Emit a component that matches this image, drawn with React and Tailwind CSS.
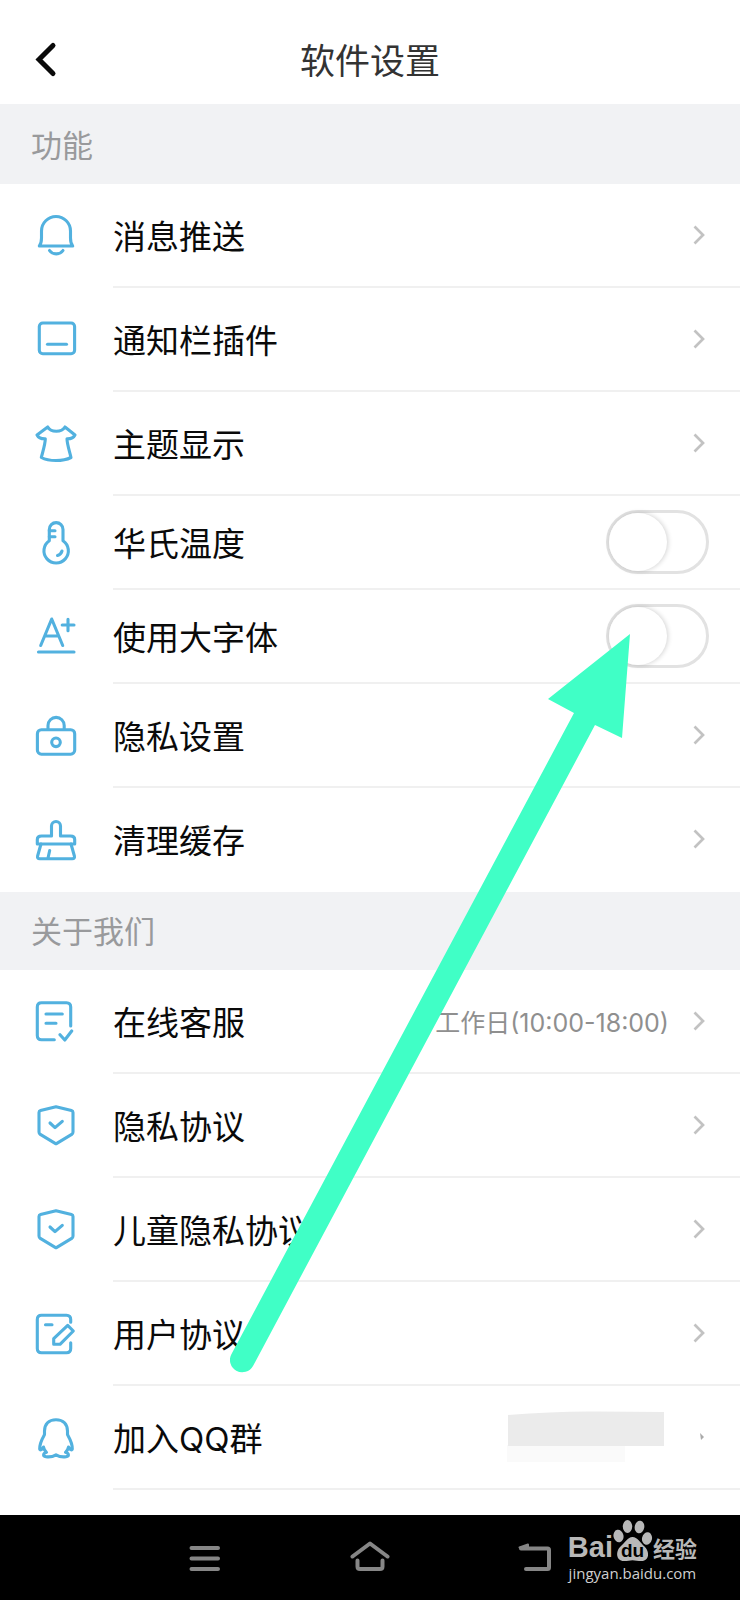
import React, { useState } from 'react';

const icons = {
  bell: (
    <>
      <path d="M5.5 15A14.5 14.5 0 0 1 34.5 15V22C34.5 25 35 28 36.7 30H3.3C5 28 5.5 25 5.5 22Z" />
      <path d="M13.5 34.5C16.5 39 24 39 27 34.5" />
    </>
  ),
  widget: (
    <>
      <rect x="3.3" y="3" width="35.3" height="30.7" rx="3.5" />
      <path d="M11.5 24.3H30.5" />
    </>
  ),
  shirt: (
    <path d="M11.7 3C15 8.7 25.5 8.7 29 3L39 11Q37 15 31 14.8C31 20 33.5 27 35 33.5Q29 36.5 20 36.5Q11 36.5 5.3 33.5C7 27 9.3 20 9.3 14.8Q3 15 1 11Z" />
  ),
  thermometer: (
    <>
      <path d="M13.3 17.7V6.5A6.8 6.8 0 0 1 27 6.5V17.7A12.2 12.2 0 1 1 13.3 17.7Z" />
      <path d="M13.3 7.7H19M13.3 13.7H19" />
      <path d="M26 28Q25 31.5 21.5 32.5" />
    </>
  ),
  font: (
    <>
      <path d="M4.7 28.5L15.7 2L26.7 28.5M8.8 19H22.7" />
      <path d="M26.2 8H38M32 2.3V13.7M2.5 35H38" />
    </>
  ),
  lock: (
    <>
      <path d="M12 13.5V9.5A8.1 8.1 0 0 1 28.2 9.5V13.5" />
      <rect x="1.4" y="13.7" width="37.3" height="24.5" rx="4" />
      <circle cx="20" cy="26.3" r="4.3" />
    </>
  ),
  brush: (
    <>
      <path d="M15.5 16V6A4.5 4.5 0 0 1 24.5 6V16H34.5Q38.7 16 38.7 19.5V24H1.3V19.5Q1.3 16 5.5 16Z" />
      <path d="M5 24L1.6 36Q1 38.7 3.7 38.7H36.3Q39 38.7 38.4 36L35 24M13.7 30.5L12 38" />
    </>
  ),
  service: (
    <>
      <path d="M34.7 24V5Q34.7 .7 30.5 .7H5.5Q1.3 .7 1.3 5V33.5Q1.3 37.7 5.5 37.7H18.3" />
      <path d="M10 12H26.3M10 21.3H20M24 32.7L28.8 38L35.7 29" />
    </>
  ),
  shield: (
    <>
      <path d="M20 .7L35.5 4.6Q37 5 37 6.5V26Q37 27.5 35.7 28.4L20 37.8L4.3 28.4Q3 27.5 3 26V6.5Q3 5 4.5 4.6Z" />
      <path d="M14 17L19 21.7L26.3 15.3" />
    </>
  ),
  agreement: (
    <>
      <path d="M34.7 8.3V5.6Q34.7 1.3 30.5 1.3H5.5Q1.3 1.3 1.3 5.6V34.5Q1.3 38.7 5.5 38.7H30.5Q34.7 38.7 34.7 34.5V28.7" />
      <path d="M9.5 10.7H16M31.7 11.3L37.3 17L24 30.3H17.7V24.7Z" />
    </>
  ),
  penguin: (
    <path d="M20 1.7C12.5 1.7 8.7 6.5 8.5 13V16.5C6 21 3.4 25.5 3.7 31C4 33 6.2 31.5 7.5 29C8 31.5 9 33 10.5 34.3C7 35.5 6.5 38.2 10 38.7C14 39.3 17.5 38.3 20 36.8C22.5 38.3 26 39.3 30 38.7C33.5 38.2 33 35.5 29.5 34.3C31 33 32 31.5 32.5 29C33.8 31.5 36 33 36.3 31C36.6 25.5 34 21 31.5 16.5V13C31.3 6.5 27.5 1.7 20 1.7Z" />
  ),
};

const Icon = ({ name }) => (
  <svg
    viewBox="0 0 40 40"
    className="size-10 shrink-0 overflow-visible"
    fill="none"
    stroke="#52b1df"
    strokeWidth="3.1"
    strokeLinecap="round"
    strokeLinejoin="round"
    aria-hidden="true"
  >
    {icons[name]}
  </svg>
);

const Chevron = () => (
  <svg viewBox="0 0 12 20" className="h-5 w-3 shrink-0" fill="none" stroke="#c2c2c2" strokeWidth="2.7" aria-hidden="true">
    <path d="M1.5 1.5L10 10L1.5 18.5" />
  </svg>
);

const SectionTitle = ({ children }) => (
  <h2 className="flex h-[78px] items-center bg-[#f1f2f4] px-[31px] pt-[2px] text-[31px] leading-10 font-normal text-[#999a9c]">
    {children}
  </h2>
);

const LinkRow = ({ icon, label, last, children }) => (
  <button type="button" className="flex h-[104px] w-full items-center gap-[37px] pl-9 text-left">
    <Icon name={icon} />
    <span className={`flex h-full flex-1 items-center justify-between border-b-2 pr-[35px] ${last ? 'border-white' : 'border-[#f0f0f0]'}`}>
      <span className="pt-1">{label}</span>
      {children || <Chevron />}
    </span>
  </button>
);

const ToggleRow = ({ id, icon, label }) => {
  const [on, setOn] = useState(false);
  return (
    <div className="flex h-[94px] items-center gap-[37px] pl-9">
      <Icon name={icon} />
      <div className="flex h-full flex-1 items-center justify-between border-b-2 border-[#f0f0f0] pr-[31px]">
        <label htmlFor={id} className="pt-1">{label}</label>
        <input
          id={id}
          type="checkbox"
          role="switch"
          checked={on}
          onChange={(e) => setOn(e.target.checked)}
          className="h-16 w-[103px] appearance-none rounded-full border-3 border-[#e2e2e2] bg-white before:block before:size-[58px] before:rounded-full before:bg-white before:shadow-[1px_0_5px_rgba(0,0,0,0.18)] checked:bg-[#52b1df] checked:before:translate-x-[39px]"
        />
      </div>
    </div>
  );
};

const Watermark = () => (
  <div className="absolute top-1 right-[43px] flex flex-col items-center text-[#b8b8b8]">
    <div className="flex h-[42px] items-end">
      <span className="font-['Liberation_Sans',sans-serif] text-[29px] leading-7 font-bold">Bai</span>
      <svg viewBox="0 0 40 42" className="h-[42px] w-10" fill="currentColor" aria-hidden="true">
        <ellipse cx="5.5" cy="17" rx="5" ry="6.3" transform="rotate(-12 5.5 17)" />
        <ellipse cx="14.5" cy="7.5" rx="4.7" ry="6.5" />
        <ellipse cx="26.5" cy="8" rx="4.8" ry="6.3" transform="rotate(10 26.5 8)" />
        <ellipse cx="34" cy="19.5" rx="5" ry="6.3" transform="rotate(12 34 19.5)" />
        <path d="M19.5 18C14.5 18 12.5 23.5 8 27C2.5 31.5 2.5 42 11 42C14.5 42 17 41.2 19.5 41.2C22 41.2 25 42 28.5 42C37 42 36.5 32 31.5 27.5C27 23.5 24.5 18 19.5 18Z" />
        <text x="19.5" y="38" textAnchor="middle" fontSize="19" fontWeight="700" fill="#000" fontFamily="Liberation Sans, sans-serif">du</text>
      </svg>
      <span className="text-[22px] leading-6 font-bold">经验</span>
    </div>
    <span className="font-['Open_Sans',sans-serif] text-[15px] leading-6 text-[#cfcfcf]">jingyan.baidu.com</span>
  </div>
);

const App = () => (
  <div className="relative flex min-h-screen flex-col overflow-hidden bg-white font-['Inter','Noto_Sans_CJK_SC',sans-serif] text-[33px] leading-10 text-[#0a0a0a]">
    <header className="grid h-[104px] grid-cols-[1fr_auto_1fr] items-center px-9 pt-4">
      <button type="button" aria-label="返回" className="w-5">
        <svg viewBox="0 0 20 34" className="h-[34px] w-5 overflow-visible" fill="none" stroke="#0a0a0a" strokeWidth="5" strokeLinecap="round">
          <path d="M17 2.5L3 16.5L17 30.5" />
        </svg>
      </button>
      <h1 className="pt-[2px] text-[35px] font-normal text-[#333]">软件设置</h1>
    </header>

    <main>
      <section className="border-t-2 border-[#f1f2f4]">
        <SectionTitle>功能</SectionTitle>
        <LinkRow icon="bell" label="消息推送" />
        <LinkRow icon="widget" label="通知栏插件" />
        <LinkRow icon="shirt" label="主题显示" />
        <ToggleRow id="fahrenheit" icon="thermometer" label="华氏温度" />
        <ToggleRow id="large-font" icon="font" label="使用大字体" />
        <LinkRow icon="lock" label="隐私设置" />
        <LinkRow icon="brush" label="清理缓存" last />
      </section>

      <section>
        <SectionTitle>关于我们</SectionTitle>
        <LinkRow icon="service" label="在线客服">
          <span className="flex items-center gap-6">
            <span className="pt-1 text-[25px] text-[#8f8f8f]">工作日(10:00-18:00)</span>
            <Chevron />
          </span>
        </LinkRow>
        <LinkRow icon="shield" label="隐私协议" />
        <LinkRow icon="shield" label="儿童隐私协议" />
        <LinkRow icon="agreement" label="用户协议" />
        <LinkRow icon="penguin" label="加入QQ群">
          {/* hidden group number */}
          <svg viewBox="0 0 198 52" className="h-[52px] w-[198px]" aria-hidden="true">
            <path d="M0 34H118V51H0Z" fill="#fafafa" />
            <path d="M1 4Q50 0 90 0.500L157 1V35H1Z" fill="#ebebeb" />
            <path d="M193 22L197 26L194 29Z" fill="#aaa" />
          </svg>
        </LinkRow>
      </section>
    </main>

    <nav className="relative mt-[25px] flex h-[85px] flex-1 items-center justify-center gap-[125px] bg-black">
      <button type="button" aria-label="菜单">
        <svg viewBox="0 0 40 40" className="size-10" stroke="#868686" strokeWidth="4" strokeLinecap="round">
          <path d="M6.500 10H33M6.500 20.500H33M6.500 31H33" />
        </svg>
      </button>
      <button type="button" aria-label="主页">
        <svg viewBox="0 0 40 40" className="size-10" fill="none" stroke="#868686" strokeWidth="4" strokeLinecap="round" strokeLinejoin="round">
          <path d="M2.500 18.500L20 5.500L37.500 18.500M7.500 22.500V28.500Q7.500 31 10 31H30Q32.500 31 32.500 28.500V22.500" />
        </svg>
      </button>
      <button type="button" aria-label="后退">
        <svg viewBox="0 0 40 40" className="size-10" fill="none" stroke="#868686" strokeWidth="4" strokeLinecap="round">
          <path d="M6 10.500H32.500Q34 10.500 34 12V29.500Q34 31 32.500 31H11" />
          <path d="M4.500 9.500L13 6.500V11Z" fill="#868686" strokeWidth="2" strokeLinejoin="round" />
        </svg>
      </button>
      <Watermark />
    </nav>

    {/* pointer to the large font switch */}
    <svg viewBox="0 0 400 740" className="pointer-events-none absolute top-[634px] right-[110px] h-[740px] w-[400px]" fill="#40ffc6" aria-hidden="true">
      <path d="M400 0L318 65L344 79L1.500 720A12.300 12.300 0 0 0 23 732L365 91L392 104Z" />
    </svg>
  </div>
);

export default App;
